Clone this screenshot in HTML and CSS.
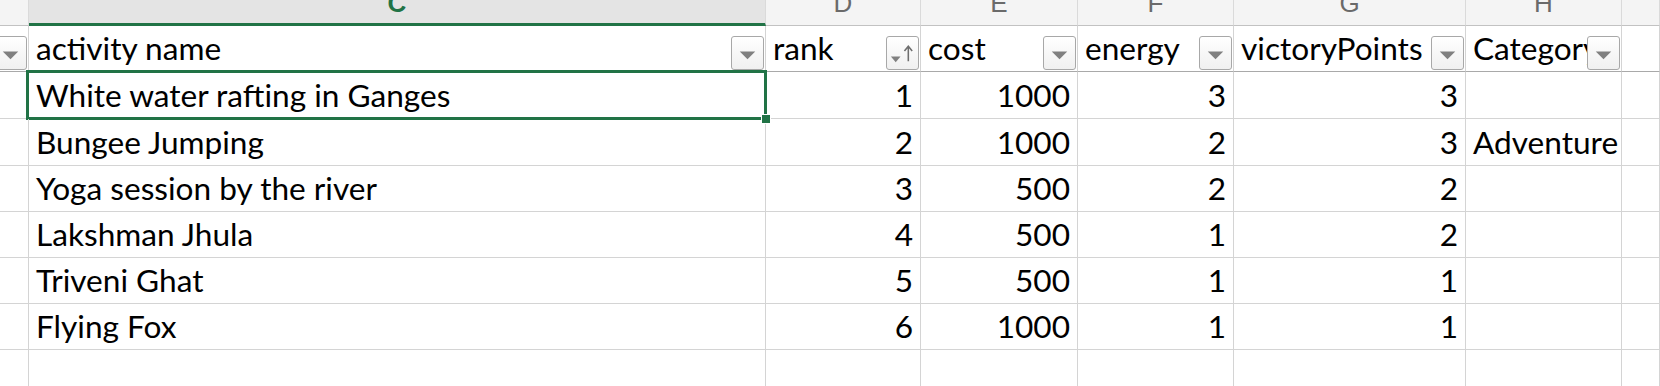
FILE: index.html
```html
<!DOCTYPE html>
<html lang="en">
<head>
    <meta charset="UTF-8">
    <meta name="viewport" content="width=device-width, initial-scale=1.0">
    <title>Activities</title>
    <link rel="stylesheet" href="styles.css">
</head>
<body>

    <div class="sheet">
        <!-- column letters -->
        <div class="letter"></div>
        <div class="letter active"><span>C</span></div>
        <div class="letter"><span>D</span></div>
        <div class="letter"><span>E</span></div>
        <div class="letter"><span>F</span></div>
        <div class="letter"><span>G</span></div>
        <div class="letter"><span>H</span></div>
        <div class="letter"></div>

        <!-- table header row -->
        <div class="cell head">
            <button class="filter"><svg viewBox="0 0 32 33"><polygon points="8,15 24,15 16,23"/></svg></button>
        </div>
        <div class="cell head"><span class="txt">activity name</span>
            <button class="filter"><svg viewBox="0 0 32 33"><polygon points="8,15 24,15 16,23"/></svg></button>
        </div>
        <div class="cell head"><span class="txt">rank</span>
            <button class="filter"><svg viewBox="0 0 32 33"><polygon class="small" points="4,20 14,20 9,26"/><path d="M22 25 V10 M18 14.5 L22 9.5 L26 14.5"/></svg></button>
        </div>
        <div class="cell head"><span class="txt">cost</span>
            <button class="filter"><svg viewBox="0 0 32 33"><polygon points="8,15 24,15 16,23"/></svg></button>
        </div>
        <div class="cell head"><span class="txt">energy</span>
            <button class="filter"><svg viewBox="0 0 32 33"><polygon points="8,15 24,15 16,23"/></svg></button>
        </div>
        <div class="cell head"><span class="txt">victoryPoints</span>
            <button class="filter"><svg viewBox="0 0 32 33"><polygon points="8,15 24,15 16,23"/></svg></button>
        </div>
        <div class="cell head"><span class="txt">Category</span>
            <button class="filter"><svg viewBox="0 0 32 33"><polygon points="8,15 24,15 16,23"/></svg></button>
        </div>
        <div class="cell head"></div>

        <!-- data -->
        <div class="cell"></div>
        <div class="cell selected">White water rafting in Ganges</div>
        <div class="cell num">1</div>
        <div class="cell num">1000</div>
        <div class="cell num">3</div>
        <div class="cell num">3</div>
        <div class="cell"></div>
        <div class="cell"></div>

        <div class="cell"></div>
        <div class="cell">Bungee Jumping</div>
        <div class="cell num">2</div>
        <div class="cell num">1000</div>
        <div class="cell num">2</div>
        <div class="cell num">3</div>
        <div class="cell">Adventure</div>
        <div class="cell"></div>

        <div class="cell"></div>
        <div class="cell">Yoga session by the river</div>
        <div class="cell num">3</div>
        <div class="cell num">500</div>
        <div class="cell num">2</div>
        <div class="cell num">2</div>
        <div class="cell"></div>
        <div class="cell"></div>

        <div class="cell"></div>
        <div class="cell">Lakshman Jhula</div>
        <div class="cell num">4</div>
        <div class="cell num">500</div>
        <div class="cell num">1</div>
        <div class="cell num">2</div>
        <div class="cell"></div>
        <div class="cell"></div>

        <div class="cell"></div>
        <div class="cell">Triveni Ghat</div>
        <div class="cell num">5</div>
        <div class="cell num">500</div>
        <div class="cell num">1</div>
        <div class="cell num">1</div>
        <div class="cell"></div>
        <div class="cell"></div>

        <div class="cell"></div>
        <div class="cell">Flying Fox</div>
        <div class="cell num">6</div>
        <div class="cell num">1000</div>
        <div class="cell num">1</div>
        <div class="cell num">1</div>
        <div class="cell"></div>
        <div class="cell"></div>

        <div class="cell"></div>
        <div class="cell"></div>
        <div class="cell"></div>
        <div class="cell"></div>
        <div class="cell"></div>
        <div class="cell"></div>
        <div class="cell"></div>
        <div class="cell"></div>
    </div>

</body>
</html>
```

FILE: styles.css
```css
body {
    margin: 0;
    background: #fff;
    font-family: Lato, "Open Sans", sans-serif;
    overflow: hidden;
}
.sheet {
    display: grid;
    grid-template-columns: 29px 737px 155px 157px 156px 232px 156px 1fr;
    grid-template-rows: 26px 46px 47px 47px 46px 46px 46px 46px 46px;
}
.letter {
    box-sizing: border-box;
    background: #f4f4f4;
    border-right: 1px solid #dadada;
    border-bottom: 1px solid #c2c2c2;
    display: flex;
    justify-content: center;
    align-items: flex-end;
    overflow: hidden;
    color: #6a6a6a;
    font-family: "Liberation Sans", Arial, sans-serif;
    font-size: 26px;
}
.letter span {
    line-height: 1;
    margin-bottom: 9px;
}
.letter.active {
    background: #e4e4e4;
    border-bottom: 3px solid #217346;
    color: #217346;
    font-weight: bold;
}
.letter.active span {
    margin-bottom: 7px;
}
.cell {
    box-sizing: border-box;
    position: relative;
    border-right: 1px solid #d4d4d4;
    border-bottom: 1px solid #d4d4d4;
    display: flex;
    align-items: flex-end;
    padding: 0 7px 6px 7px;
    font-size: 31.6px;
    line-height: 1;
    white-space: nowrap;
    color: #000;
}
.cell.num {
    justify-content: flex-end;
}
.cell.head {
    border-bottom: 1px solid #a9a9a9;
    overflow: hidden;
}
.filter {
    position: absolute;
    right: 1px;
    bottom: 1px;
    width: 33px;
    height: 34px;
    padding: 0;
    border: 1px solid #a8a8a8;
    border-radius: 3px;
    background: linear-gradient(#ffffff, #f0f0f0);
}
.filter svg {
    display: block;
    width: 100%;
    height: 100%;
}
.filter polygon {
    fill: #808080;
}
.filter path {
    fill: none;
    stroke: #6e6e6e;
    stroke-width: 1.6;
}
.selected::before {
    content: "";
    position: absolute;
    top: -2px;
    left: -3px;
    right: -2px;
    bottom: -2px;
    border: 3px solid #217346;
    pointer-events: none;
}
.selected::after {
    content: "";
    position: absolute;
    right: -6px;
    bottom: -6px;
    width: 8px;
    height: 8px;
    background: #217346;
    border: 1px solid #fff;
    z-index: 2;
}
```
